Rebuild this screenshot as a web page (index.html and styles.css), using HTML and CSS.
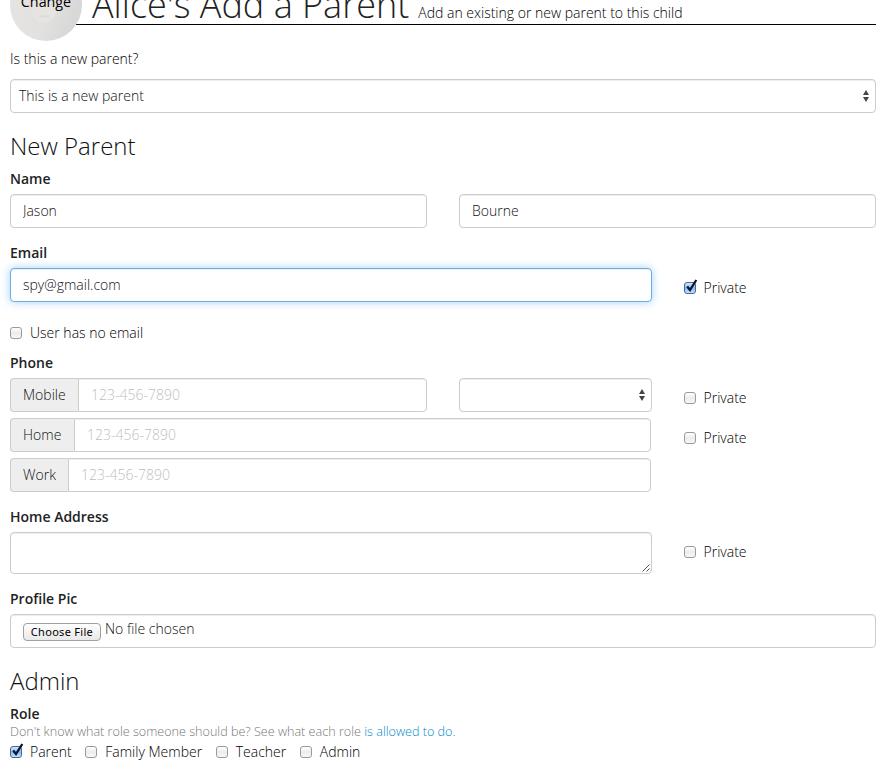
FILE: index.html
```
<!DOCTYPE html>
<html lang="en">
<head>
<meta charset="utf-8">
<title>Add a Parent</title>
<link rel="stylesheet" href="styles.css">
</head>
<body>
<header class="page-header">
  <div class="avatar">
    <svg class="portrait" viewBox="0 0 72 72" aria-hidden="true">
      <defs><linearGradient id="skin" x2="1" y2=".4"><stop stop-color="#e6e5e4"/><stop offset=".65" stop-color="#e2e1e0"/><stop offset="1" stop-color="#d8d8d8"/></linearGradient></defs>
      <rect width="72" height="72" fill="url(#skin)"/>
      <ellipse cx="34" cy="36" rx="13" ry="18" fill="#e6e3e1"/>
      <path d="M29 47q5 1 10 0" fill="none" stroke="#dedad8" stroke-width="1.5"/>
    </svg>
    <span class="avatar-text">Change</span>
  </div>
  <div class="title-bar">
    <h1>Alice's Add a Parent</h1>
    <span class="subtitle">Add an existing or new parent to this child</span>
  </div>
</header>
<main>
  <div class="group new-parent">
    <div class="label">Is this a new parent?</div>
    <div class="control select"><span>This is a new parent</span><svg class="arrows" viewBox="0 0 6 12"><path d="M3 0l3 5H0zM0 7h6l-3 5z"/></svg></div>
  </div>
  <h3>New Parent</h3>
  <div class="group">
    <div class="label strong">Name</div>
    <div class="row halves">
      <input class="control" value="Jason">
      <input class="control" value="Bourne">
    </div>
  </div>
  <div class="group email">
    <div class="label strong">Email</div>
    <div class="row wide">
      <input class="control focused" value="spy@gmail.com">
      <label class="check"><span class="box on"><svg viewBox="0 0 14 14"><path d="M3.2 6.6l2.8 3.4L12.3 0"/></svg></span>Private</label>
    </div>
  </div>
  <label class="check no-email"><span class="box"></span>User has no email</label>
  <div class="group">
    <div class="label strong">Phone</div>
    <div class="phones">
      <div class="row phone">
        <div class="addon-group"><span class="addon mobile">Mobile</span><input class="control" placeholder="123-456-7890"></div>
        <div class="control select"><span></span><svg class="arrows" viewBox="0 0 6 12"><path d="M3 0l3 5H0zM0 7h6l-3 5z"/></svg></div>
        <label class="check"><span class="box"></span>Private</label>
      </div>
      <div class="row wide">
        <div class="addon-group short"><span class="addon home">Home</span><input class="control" placeholder="123-456-7890"></div>
        <label class="check"><span class="box"></span>Private</label>
      </div>
      <div class="row wide">
        <div class="addon-group short"><span class="addon work">Work</span><input class="control" placeholder="123-456-7890"></div>
      </div>
    </div>
  </div>
  <div class="group">
    <div class="label strong">Home Address</div>
    <div class="row wide">
      <div class="control area"><svg class="grip" viewBox="0 0 8 8"><path d="M.5 7.5l7-7M4.5 7.5l3-3"/></svg></div>
      <label class="check"><span class="box"></span>Private</label>
    </div>
  </div>
  <div class="group">
    <div class="label strong">Profile Pic</div>
    <div class="control file"><span class="file-button">Choose File</span><span>No file chosen</span></div>
  </div>
  <h3>Admin</h3>
  <div class="label strong role">Role</div>
  <div class="help">Don't know what role someone should be? See what each role <a>is allowed to do.</a></div>
  <div class="roles">
    <label class="check"><span class="box on"><svg viewBox="0 0 14 14"><path d="M3.2 6.6l2.8 3.4L12.3 0"/></svg></span>Parent</label>
    <label class="check"><span class="box"></span>Family Member</label>
    <label class="check"><span class="box"></span>Teacher</label>
    <label class="check"><span class="box"></span>Admin</label>
  </div>
</main>
</body>
</html>
```
FILE: styles.css
```
* { box-sizing: border-box; }
html { overflow: hidden; }
body {
  margin: 0;
  padding: 0 11px 0 10px;
  background: #fff;
  color: #000;
  font: 300 14px/20px "Open Sans", sans-serif;
}
.page-header { position: relative; }
.title-bar {
  display: flex;
  align-items: baseline;
  height: 25px;
  margin-left: 62px;
  padding-left: 20px;
  border-bottom: 1px solid #000;
}
h1 {
  margin: -22px 9px 0 0;
  color: #222;
  font-size: 36px;
  line-height: 54px;
  font-weight: 300;
  white-space: nowrap;
}
.subtitle { white-space: nowrap; }
.avatar {
  position: absolute;
  left: 0;
  top: -31px;
  width: 72px;
  height: 72px;
  border-radius: 50%;
  overflow: hidden;
}
.portrait { display: block; width: 72px; height: 72px; }
.avatar-text {
  position: absolute;
  left: 0;
  top: 23px;
  width: 100%;
  text-align: center;
  color: #000;
  font-size: 14.3px;
  font-weight: 400;
}
.group { margin-bottom: 15px; }
.new-parent { margin: 24px 0 0; }
.new-parent .label { margin-bottom: 10px; }
.label { height: 20px; margin-bottom: 5px; }
.strong { font-weight: 600; color: #222; }
h3 {
  margin: 20px 0 10px;
  color: #111;
  font-size: 24px;
  line-height: 26px;
  font-weight: 300;
}
.control {
  display: block;
  width: 100%;
  height: 34px;
  margin: 0;
  padding: 0 12px 1px;
  border: 1px solid #ccc;
  border-radius: 4px;
  background: #fff;
  box-shadow: inset 0 1px 1px rgba(0, 0, 0, .075);
  color: #111;
  font: inherit;
  outline: 0;
}
.control::placeholder { color: #c0c0c0; opacity: 1; }
.focused {
  border-color: #66afe9;
  box-shadow: inset 0 1px 1px rgba(0, 0, 0, .075), 0 0 8px rgba(102, 175, 233, .6);
}
.select {
  display: flex;
  align-items: center;
  justify-content: space-between;
  padding: 0 6px 0 8px;
}
.arrows { width: 6px; height: 12px; fill: #444; }
.row { display: grid; column-gap: 32px; }
.halves { grid-template-columns: 417px 417px; }
.wide { grid-template-columns: 642px 1fr; }
.phone { grid-template-columns: 417px 193px 1fr; }
.phones { display: grid; row-gap: 6px; }
.email { margin-bottom: 21px; }
.check { display: flex; align-items: center; height: 20px; white-space: nowrap; }
.row .check { margin-top: 10px; }
.row .box { margin-right: 7.5px; }
.no-email { margin-bottom: 10px; }
.box {
  flex: none;
  width: 12px;
  height: 12px;
  margin-right: 8px;
  border: 1px solid #999;
  border-radius: 3px;
  background: linear-gradient(#fff, #ececec 50%, #f8f8f8);
}
.box.on { border-color: #4f6299; background: linear-gradient(#d5e8fa, #83bcf0 50%, #b9e5ff); }
.box svg { display: block; width: 14px; height: 14px; margin: -3px 0 0 -1px; overflow: visible; }
.box path { fill: none; stroke: #0b1430; stroke-width: 2.3; }
.addon-group { display: flex; }
.addon-group.short { width: 641px; }
.addon {
  flex: none;
  height: 34px;
  padding: 6px 0 0 12px;
  border: 1px solid #ccc;
  border-right: 0;
  border-radius: 4px 0 0 4px;
  background: #eee;
  color: #111;
}
.mobile { width: 68px; }
.home { width: 64px; }
.work { width: 58px; }
.addon-group .control { flex: 1; width: auto; min-width: 0; border-radius: 0 4px 4px 0; }
.area { display: flex; align-items: flex-end; justify-content: flex-end; height: 42px; padding: 1px; }
.grip { width: 8px; height: 8px; fill: none; stroke: #555; }
.file { display: flex; padding-top: 4px; }
.file-button {
  width: 78px;
  height: 18px;
  margin: 4px 4px 0 0;
  border: 1px solid #a0a0a0;
  border-radius: 4px;
  background: linear-gradient(#fff, #f3f3f3 50%, #e9e9e9);
  color: #000;
  font: 400 11px/16px "Noto Sans", sans-serif;
  letter-spacing: .3px;
  text-align: center;
  white-space: nowrap;
}
.role { margin: 0; }
.help { height: 15px; color: #777; font-size: 12.6px; line-height: 15px; }
.help a { color: #0089cc; }
.roles { display: flex; gap: 13.6px; margin-top: 3px; }
```
